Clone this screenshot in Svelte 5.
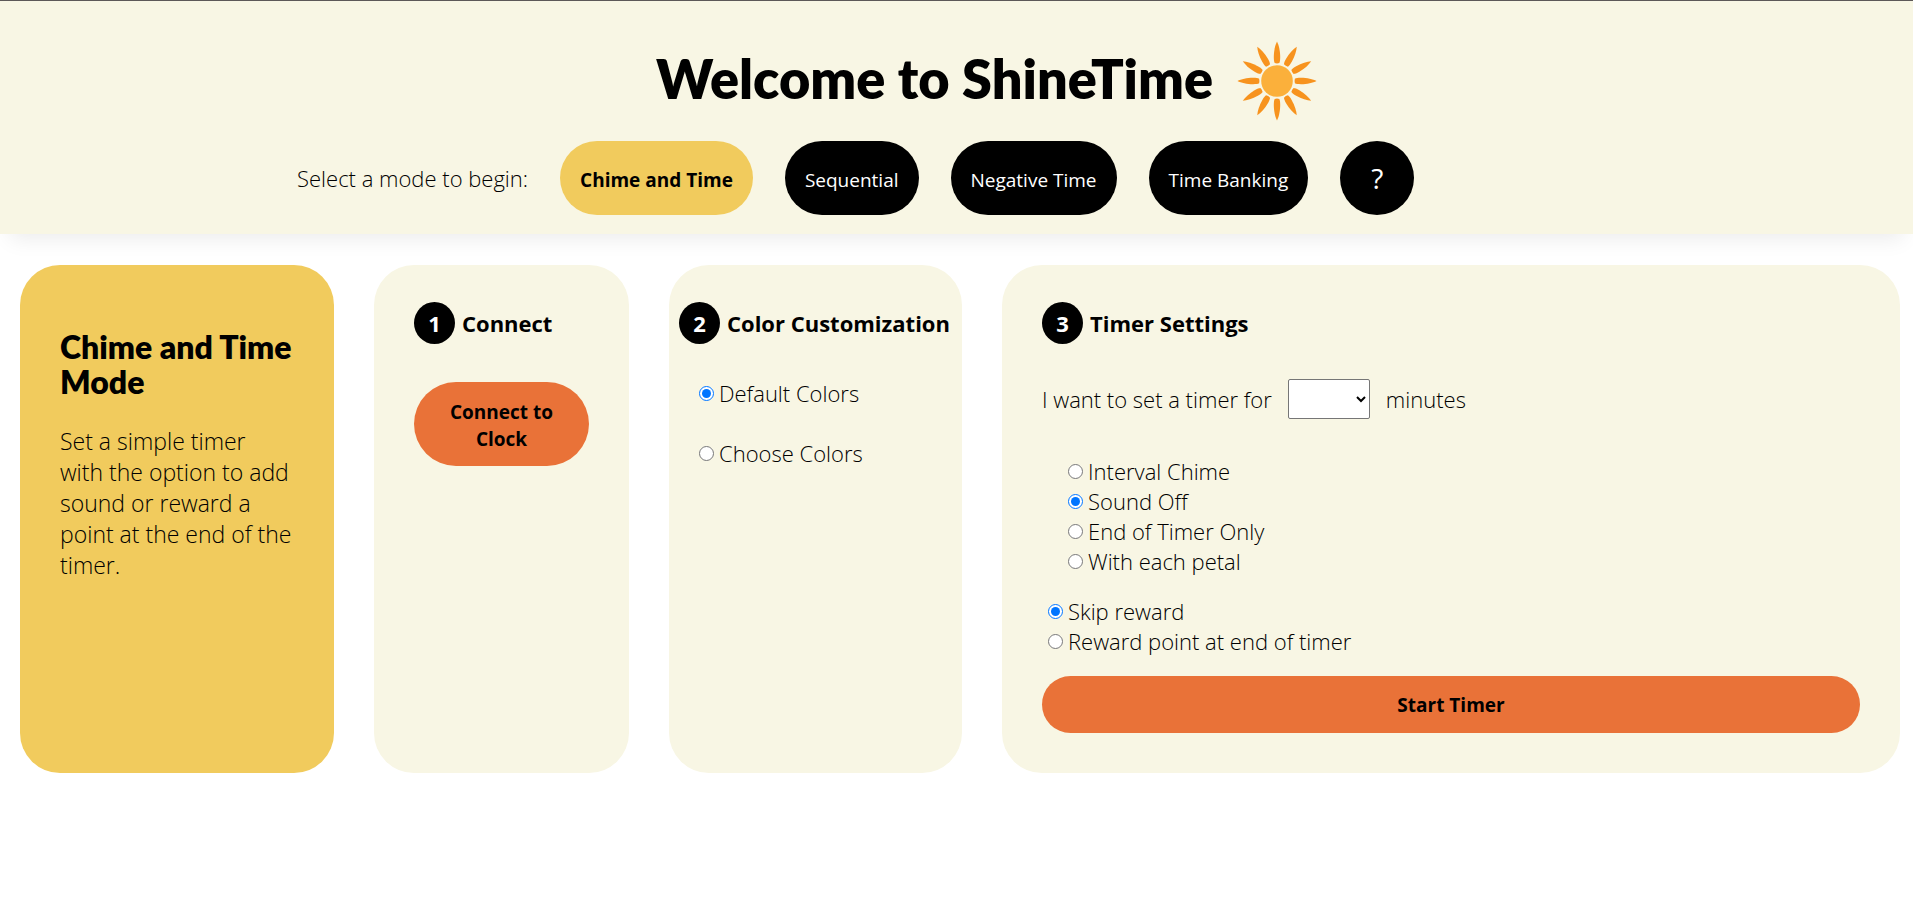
<script>
  const modes = ['Chime and Time', 'Sequential', 'Negative Time', 'Time Banking'];
  const sounds = ['Interval Chime', 'Sound Off', 'End of Timer Only', 'With each petal'];
  const rewards = ['Skip reward', 'Reward point at end of timer'];
  const rays = Array.from({ length: 12 }, (_, i) => i * 30);

  let mode = $state('Chime and Time');
  let color = $state('Default Colors');
  let sound = $state('Sound Off');
  let reward = $state('Skip reward');
  let minutes = $state('');
</script>

<header>
  <div class="brand">
    <h1>Welcome to ShineTime</h1>
    <svg class="sun" viewBox="-40 -40 80 80" aria-hidden="true">
      {#each rays as angle}
        <path
          d="M0 -39.5C1.8 -36 3.2 -30 3.2 -24C3.2 -21 2.9 -19 2.3 -17.9Q0 -17.2 -2.3 -17.9C-2.9 -19 -3.2 -21 -3.2 -24C-3.2 -30 -1.8 -36 0 -39.5Z"
          transform="rotate({angle})"
        />
      {/each}
      <circle r="15.8" />
    </svg>
  </div>
  <nav>
    <span class="prompt">Select a mode to begin:</span>
    {#each modes as name}
      <button class="mode" class:active={mode === name} onclick={() => (mode = name)}>{name}</button>
    {/each}
    <button class="mode help">?</button>
  </nav>
</header>

<main>
  <section class="card intro">
    <h2>Chime and Time Mode</h2>
    <p>Set a simple timer with the option to add sound or reward a point at the end of the timer.</p>
  </section>

  <section class="card">
    <h3><span class="step">1</span>Connect</h3>
    <button class="action connect">Connect to Clock</button>
  </section>

  <section class="card colors">
    <h3><span class="step">2</span>Color Customization</h3>
    <div class="color-options">
      <label><input type="radio" name="color" value="Default Colors" bind:group={color} />Default Colors</label>
      <label><input type="radio" name="color" value="Choose Colors" bind:group={color} />Choose Colors</label>
    </div>
  </section>

  <section class="card">
    <h3><span class="step">3</span>Timer Settings</h3>
    <div class="duration">
      <label for="minutes">I want to set a timer for</label>
      <select id="minutes" bind:value={minutes}>
        <option value=""></option>
        <option value="5">5</option>
        <option value="10">10</option>
        <option value="30">30</option>
        <option value="60">60</option>
      </select>
      <span>minutes</span>
    </div>
    <div class="options sounds">
      {#each sounds as name}
        <label><input type="radio" name="sound" value={name} bind:group={sound} />{name}</label>
      {/each}
    </div>
    <div class="options rewards">
      {#each rewards as name}
        <label><input type="radio" name="reward" value={name} bind:group={reward} />{name}</label>
      {/each}
    </div>
    <button class="action start">Start Timer</button>
  </section>
</main>

<style>
  :global(body) {
    margin: 0;
    background: #fff;
    color: #000;
    font-family: "Segoe UI", "Open Sans", "Noto Sans", sans-serif;
    font-size: 22px;
    font-weight: 300;
  }

  header {
    box-sizing: border-box;
    padding: 40px 0 19px;
    border-top: 1px solid #5c5858;
    background: #f8f6e4;
    box-shadow: 0 15px 20px -10px rgba(0, 0, 0, 0.08);
  }

  .brand {
    display: flex;
    align-items: center;
    justify-content: center;
    gap: 24px;
    padding-left: 60px;
  }

  h1, h2 {
    margin: 0;
    font-family: "Gill Sans", "Gill Sans MT", Lato, sans-serif;
    font-weight: 800;
  }

  h1 {
    font-size: 54px;
    line-height: 60px;
    padding-bottom: 4px;
  }

  .sun {
    width: 80px;
    height: 80px;
    fill: #f7931e;
  }

  .sun circle {
    fill: #fbb03b;
  }

  nav {
    display: flex;
    align-items: center;
    gap: 32px;
    margin: 20px 0 0 297px;
  }

  .mode {
    height: 74px;
    padding: 4px 20px 0;
    border: 0;
    border-radius: 37px;
    background: #000;
    color: #fff;
    font: inherit;
    font-size: 19px;
    font-weight: 400;
    white-space: nowrap;
  }

  .mode.active {
    background: #f1cb5d;
    color: #000;
    font-weight: 700;
  }

  .mode.help {
    width: 74px;
    padding: 0;
    font-size: 28px;
  }

  main {
    display: grid;
    grid-template-columns: 314fr 255fr 293fr 898fr;
    gap: 40px;
    padding: 31px 13px 31px 20px;
  }

  .card {
    display: flex;
    flex-direction: column;
    min-width: 0;
    box-sizing: border-box;
    padding: 37px 40px 40px;
    border-radius: 40px;
    background: #f8f6e4;
  }

  .intro {
    padding-top: 64px;
    background: #f1cb5d;
  }

  h2 {
    font-size: 32px;
    line-height: 35px;
  }

  .intro p {
    margin: 27px 0 0;
    font-size: 23px;
    line-height: 31px;
  }

  h3 {
    display: flex;
    align-items: center;
    gap: 7px;
    margin: 0;
    font-size: 22px;
    font-weight: 700;
    line-height: 42px;
    white-space: nowrap;
  }

  .step {
    width: 41px;
    height: 42px;
    border-radius: 50%;
    background: #000;
    color: #fff;
    text-align: center;
  }

  .action {
    border: 0;
    border-radius: 42px;
    background: #e97238;
    color: #000;
    font: inherit;
    font-size: 19px;
    font-weight: 700;
    line-height: 27px;
  }

  .connect {
    margin-top: 38px;
    padding: 17px 30px 13px;
  }

  .colors {
    padding-right: 10px;
    padding-left: 10px;
  }

  .color-options {
    display: grid;
    gap: 30px;
    margin: 34px 0 0 20px;
  }

  .color-options label,
  .options label {
    display: flex;
    align-items: center;
    gap: 5px;
    line-height: 30px;
  }

  input {
    width: 15px;
    height: 15px;
    margin: 0;
  }

  .duration {
    display: flex;
    align-items: center;
    gap: 16px;
    margin-top: 35px;
  }

  select {
    width: 82px;
    height: 40px;
    border: 1px solid #767676;
    border-radius: 2px;
    background-color: #fff;
    color: #000;
    font: inherit;
  }

  .sounds {
    margin: 37px 0 0 26px;
  }

  .rewards {
    margin: 20px 0 0 6px;
  }

  .start {
    margin-top: 20px;
    padding: 16px 20px 14px;
  }
</style>
